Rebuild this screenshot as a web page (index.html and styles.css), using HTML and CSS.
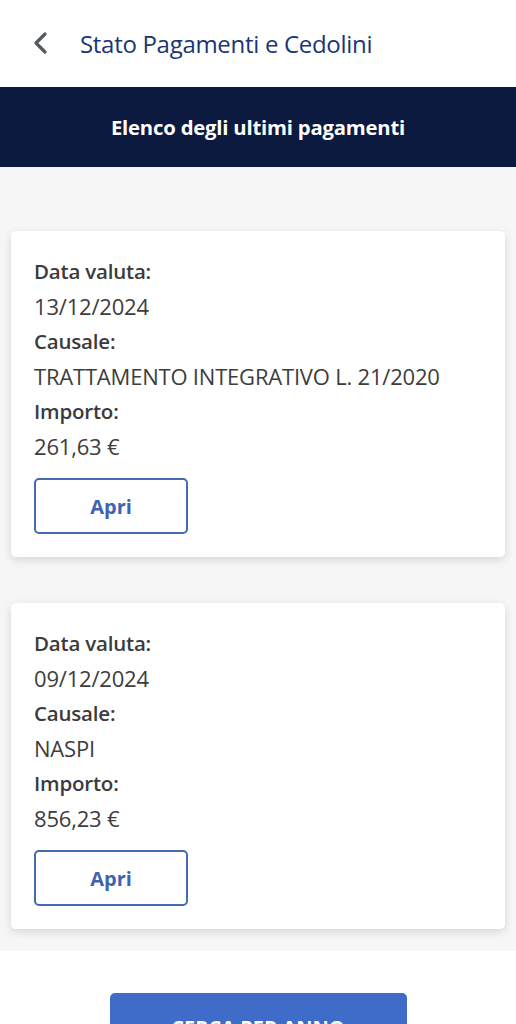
FILE: index.html
```html
<!DOCTYPE html>
<html lang="it">
<head>
<meta charset="utf-8">
<link rel="stylesheet" href="styles.css">
</head>
<body>
<header class="topbar">
  <svg class="back" viewBox="0 0 16 24" width="16" height="24"><path d="M13 3 L4 12 L13 21" fill="none" stroke="#555a60" stroke-width="3.2" stroke-linecap="round" stroke-linejoin="round"/></svg>
  <h1 class="title">Stato Pagamenti e Cedolini</h1>
</header>
<div class="band">Elenco degli ultimi pagamenti</div>
<main class="list">
  <section class="card">
    <div class="label">Data valuta:</div>
    <div class="value">13/12/2024</div>
    <div class="label">Causale:</div>
    <div class="value">TRATTAMENTO INTEGRATIVO L. 21/2020</div>
    <div class="label">Importo:</div>
    <div class="value">261,63 €</div>
    <button class="open">Apri</button>
  </section>
  <section class="card">
    <div class="label">Data valuta:</div>
    <div class="value">09/12/2024</div>
    <div class="label">Causale:</div>
    <div class="value">NASPI</div>
    <div class="label">Importo:</div>
    <div class="value">856,23 €</div>
    <button class="open">Apri</button>
  </section>
</main>
<div class="footer">
  <button class="search">CERCA PER ANNO</button>
</div>
</body>
</html>
```
FILE: styles.css
```css
* { box-sizing: border-box; }
html, body { margin: 0; padding: 0; background: #fff; }
body { font-family: "Open Sans", "Liberation Sans", sans-serif; width: 516px; overflow: hidden; height: 1024px; }
.topbar { height: 87px; display: flex; align-items: center; padding-left: 32px; background: #fff; }
.back { display: block; margin-top: -2px; }
.title { margin: 0 0 0 32px; font-size: 24px; font-weight: 400; color: #1c3573; letter-spacing: -0.3px; }
.band { height: 80px; background: #0b1a3e; color: #fff; font-weight: 700; font-size: 20.3px; display: flex; align-items: center; justify-content: center; letter-spacing: -0.2px; }
.list { background: #f6f6f6; padding: 64px 11px 22px; display: flex; flex-direction: column; gap: 46px; }
.card { background: #fff; border-radius: 5px; box-shadow: 0 3px 10px rgba(0,0,0,0.13); padding: 23px 23px 23px; display: flex; flex-direction: column; align-items: flex-start; }
.label, .value { line-height: 35px; letter-spacing: -0.2px; }
.label { font-size: 20.5px; font-weight: 600; color: #3b3b3b; }
.value { font-size: 22px; font-weight: 400; color: #3d3d3d; }
.open { margin-top: 14px; width: 154px; height: 56px; border: 2.5px solid #4469b5; border-radius: 5px; background: #fff; color: #3f63ae; font-family: inherit; font-weight: 700; font-size: 20px; }
.footer { display: flex; justify-content: center; padding-top: 42px; }
.search { width: 297px; height: 60px; border: 0; border-radius: 5px; background: #3f6bc9; color: #fff; font-family: inherit; font-weight: 700; font-size: 20px; padding-top: 10px; }
```
